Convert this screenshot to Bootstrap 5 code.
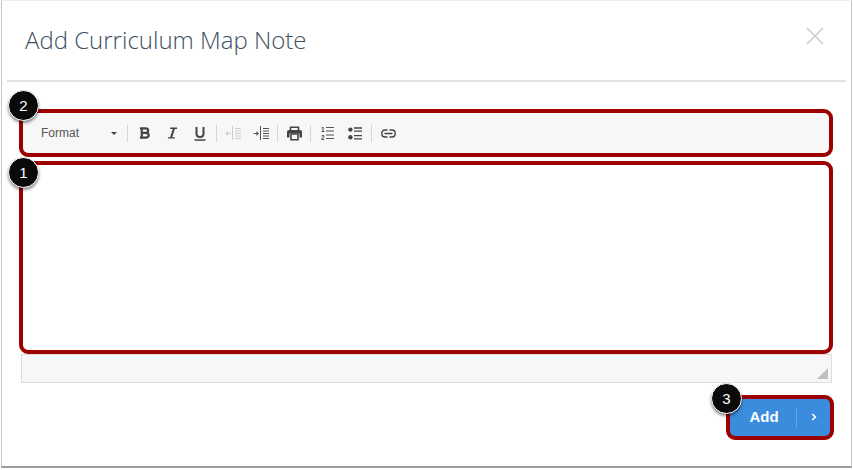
<!DOCTYPE html>
<html lang="en">

<head>
  <meta charset="UTF-8" />
  <title>Add Curriculum Map Note</title>
  <link href="https://cdn.jsdelivr.net/npm/bootstrap@5.3.0/dist/css/bootstrap.min.css" rel="stylesheet" />
  <script src="https://cdn.jsdelivr.net/npm/bootstrap@5.3.0/dist/js/bootstrap.bundle.min.js"></script>
  <style>
    body {
      background: #fff;
      width: 853px;
      height: 470px;
      overflow: hidden;
      font-family: "Open Sans", "Liberation Sans", sans-serif;
    }

    .note-window {
      position: relative;
      width: 851px;
      height: 468px;
      margin-left: 1px;
      background: #fff;
      border-left: 1px solid #c4c4c4;
      border-right: 1px solid #c4c4c4;
      border-bottom: 2px solid #9c9c9c;
      border-top: 1px solid #eee;
      padding: 0 5px;
    }

    .note-head {
      height: 57px;
      border-bottom: 2px solid #e2e2e2;
      padding: 22px 18px 0;
      box-sizing: content-box;
    }

    .note-title {
      font-size: 24px;
      font-weight: 300;
      line-height: 34px;
      color: #3d4f5f;
      margin: 0;
    }

    .close-x {
      width: 20px;
      height: 20px;
      margin: 3px 3px 0 0;
    }

    .note-body {
      padding: 27px 13px 0 12px;
    }

    .red-box {
      border: 4px solid #9c0000;
      border-radius: 9px;
    }

    .format-bar {
      height: 48px;
      background: #f7f7f7;
      color: #555;
      padding-left: 18px;
    }

    .format-label {
      width: 84px;
      font-family: "Liberation Sans", Arial, sans-serif;
      font-size: 12px;
      color: #555;
    }

    .format-caret {
      width: 0;
      height: 0;
      border-left: 3px solid transparent;
      border-right: 3px solid transparent;
      border-top: 3px solid #444;
      margin-left: auto;
      margin-right: 8px;
    }

    .bar-sep {
      width: 1px;
      height: 17px;
      background: #d5d5d5;
      margin: 0 2px;
    }

    .bar-btn {
      width: 28px;
      display: flex;
      justify-content: center;
      align-items: center;
      height: 20px;
    }

    .edit-area {
      height: 193px;
      margin-top: 4px;
      background: #fff;
    }

    .status-strip {
      height: 29px;
      margin: 0 1px 0 2px;
      background: #f7f7f7;
      border: 1px solid #ddd;
      padding: 0 3px 3px 0;
    }

    .note-foot {
      padding: 12px 0 0;
    }

    .add-wrap {
      width: 108px;
      height: 45px;
      margin-right: -1px;
      background: #3b8cdc;
      border-color: #9c0000;
      color: #fff;
      font-family: "Liberation Sans", Arial, sans-serif;
      font-size: 15px;
      font-weight: 700;
    }

    .add-text {
      width: 66px;
      text-align: center;
      padding-left: 2px;
    }

    .add-split {
      width: 1px;
      height: 20px;
      background: #6aa6e3;
    }

    .add-arrow {
      flex: 1;
      display: flex;
      justify-content: center;
      padding-bottom: 2px;
    }

    .num-pin {
      position: absolute;
      width: 31px;
      height: 31px;
      border-radius: 50%;
      background: #0a0a0a;
      border: 1px solid #fff;
      box-shadow: 0 2px 3px rgba(0, 0, 0, .45);
      color: #fff;
      font-family: "Liberation Sans", Arial, sans-serif;
      font-size: 15px;
      line-height: 29px;
      text-align: center;
    }

    .pin-two { left: 6px; top: 89px; }
    .pin-one { left: 6px; top: 156px; }
    .pin-three { left: 709px; top: 382px; }

    .ol-digit {
      font-family: "Liberation Sans", Arial, sans-serif;
      font-size: 6.5px;
      font-weight: 700;
      fill: #444;
    }
  </style>
</head>

<body>
  <div class="note-window">
    <div class="note-head d-flex justify-content-between align-items-start">
      <h1 class="note-title">Add Curriculum Map Note</h1>
      <svg class="close-x" viewBox="0 0 20 20" fill="none" stroke="#cfcfcf" stroke-width="1.7">
        <path d="M2 2 L18 18 M18 2 L2 18" />
      </svg>
    </div>

    <div class="note-body">
      <!-- 서식 툴바 -->
      <div class="format-bar red-box d-flex align-items-center">
        <div class="format-label d-flex align-items-center">Format<span class="format-caret"></span></div>
        <span class="bar-sep"></span>
        <span class="bar-btn">
          <svg width="11" height="12" viewBox="0 0 12 13" fill="none" stroke="#444" stroke-width="2.4">
            <path d="M3 1.5 V11.5 M1 1.5 H7 Q10 1.5 10 4 Q10 6.3 7 6.3 H3 M7 6.3 Q10.6 6.3 10.6 9 Q10.6 11.5 7 11.5 H1" />
          </svg>
        </span>
        <span class="bar-btn">
          <svg width="11" height="12" viewBox="0 0 12 13" fill="none" stroke="#444">
            <path stroke-width="2.2" d="M7.6 1.5 L4.4 11.5" />
            <path stroke-width="1.6" d="M3.5 1.2 H11 M1 11.8 H8.5" />
          </svg>
        </span>
        <span class="bar-btn">
          <svg width="12" height="15" viewBox="0 0 12 15" fill="none" stroke="#444">
            <path stroke-width="2" d="M2.5 1 V7.5 Q2.5 11 6 11 Q9.5 11 9.5 7.5 V1" />
            <path stroke-width="1.5" d="M0.5 14 H11.5" />
          </svg>
        </span>
        <span class="bar-sep"></span>
        <span class="bar-btn">
          <svg width="16" height="14" viewBox="0 0 16 14" fill="none" stroke="#cdcdcd" stroke-width="1">
            <path d="M7.5 0 V14 M10 2.5 H16 M10 5 H16 M10 7.5 H16 M10 10 H16 M10 12.5 H16 M.5 7.5 H6" />
            <path fill="#cdcdcd" stroke="none" d="M3 5 V10 L.5 7.5 Z" />
          </svg>
        </span>
        <span class="bar-btn">
          <svg width="16" height="14" viewBox="0 0 16 14" fill="none" stroke="#555" stroke-width="1">
            <path d="M7.5 0 V14 M10 2.5 H16 M10 5 H16 M10 7.5 H16 M10 10 H16 M10 12.5 H16 M.5 7.5 H4" />
            <path fill="#555" stroke="none" d="M3.5 5 V10 L6 7.5 Z" />
          </svg>
        </span>
        <span class="bar-sep"></span>
        <span class="bar-btn">
          <svg width="15" height="15" viewBox="0 0 15 15" fill="none" stroke="#444">
            <path stroke-width="1.6" d="M3.5 4 V1.2 H11.5 V4" />
            <path fill="#444" stroke="none" d="M2 4 H13 Q15 4 15 6 V11.5 H12.5 V7.5 H2.5 V11.5 H0 V6 Q0 4 2 4 Z" />
            <path stroke-width="1.6" d="M4 8 H11 V13.8 H4 Z" />
          </svg>
        </span>
        <span class="bar-sep"></span>
        <span class="bar-btn">
          <svg width="13" height="14" viewBox="0 0 13 14" fill="none" stroke="#555" stroke-width="1.2">
            <text class="ol-digit" x="0" y="6" stroke="none">1</text>
            <text class="ol-digit" x="0" y="13.5" stroke="none">2</text>
            <path d="M5 1.5 H13 M5 5 H13 M5 9 H13 M5 12.5 H13" />
          </svg>
        </span>
        <span class="bar-btn">
          <svg width="14" height="13" viewBox="0 0 14 13" fill="#444">
            <circle cx="2.4" cy="2.6" r="2.2" />
            <circle cx="2.4" cy="10.2" r="2.2" />
            <path fill="none" stroke="#444" stroke-width="1.3" d="M6 1 H14 M6 4.2 H14 M6 8.6 H14 M6 11.8 H14" />
          </svg>
        </span>
        <span class="bar-sep"></span>
        <span class="bar-btn">
          <svg width="15" height="9" viewBox="0 0 15 9" fill="none" stroke="#444" stroke-width="1.4">
            <path d="M6.5 1 H4 Q.8 1 .8 4.5 Q.8 8 4 8 H6.5 M8.5 1 H11 Q14.2 1 14.2 4.5 Q14.2 8 11 8 H8.5 M3.5 4.5 H11.5" />
          </svg>
        </span>
      </div>

      <!-- 입력 영역 -->
      <div class="edit-area red-box"></div>

      <div class="status-strip d-flex justify-content-end align-items-end">
        <svg width="11" height="11" viewBox="0 0 11 11">
          <path fill="#c0c0c0" d="M11 0 V11 H0 Z" />
        </svg>
      </div>

      <div class="note-foot d-flex justify-content-end">
        <div class="add-wrap red-box d-flex align-items-center">
          <span class="add-text">Add</span>
          <span class="add-split"></span>
          <span class="add-arrow">
            <svg width="6" height="8" viewBox="0 0 7 9" fill="none" stroke="#fff" stroke-width="2">
              <path d="M1.5 1 L5 4.5 L1.5 8" />
            </svg>
          </span>
        </div>
      </div>
    </div>

    <span class="num-pin pin-two">2</span>
    <span class="num-pin pin-one">1</span>
    <span class="num-pin pin-three">3</span>
  </div>
</body>

</html>
